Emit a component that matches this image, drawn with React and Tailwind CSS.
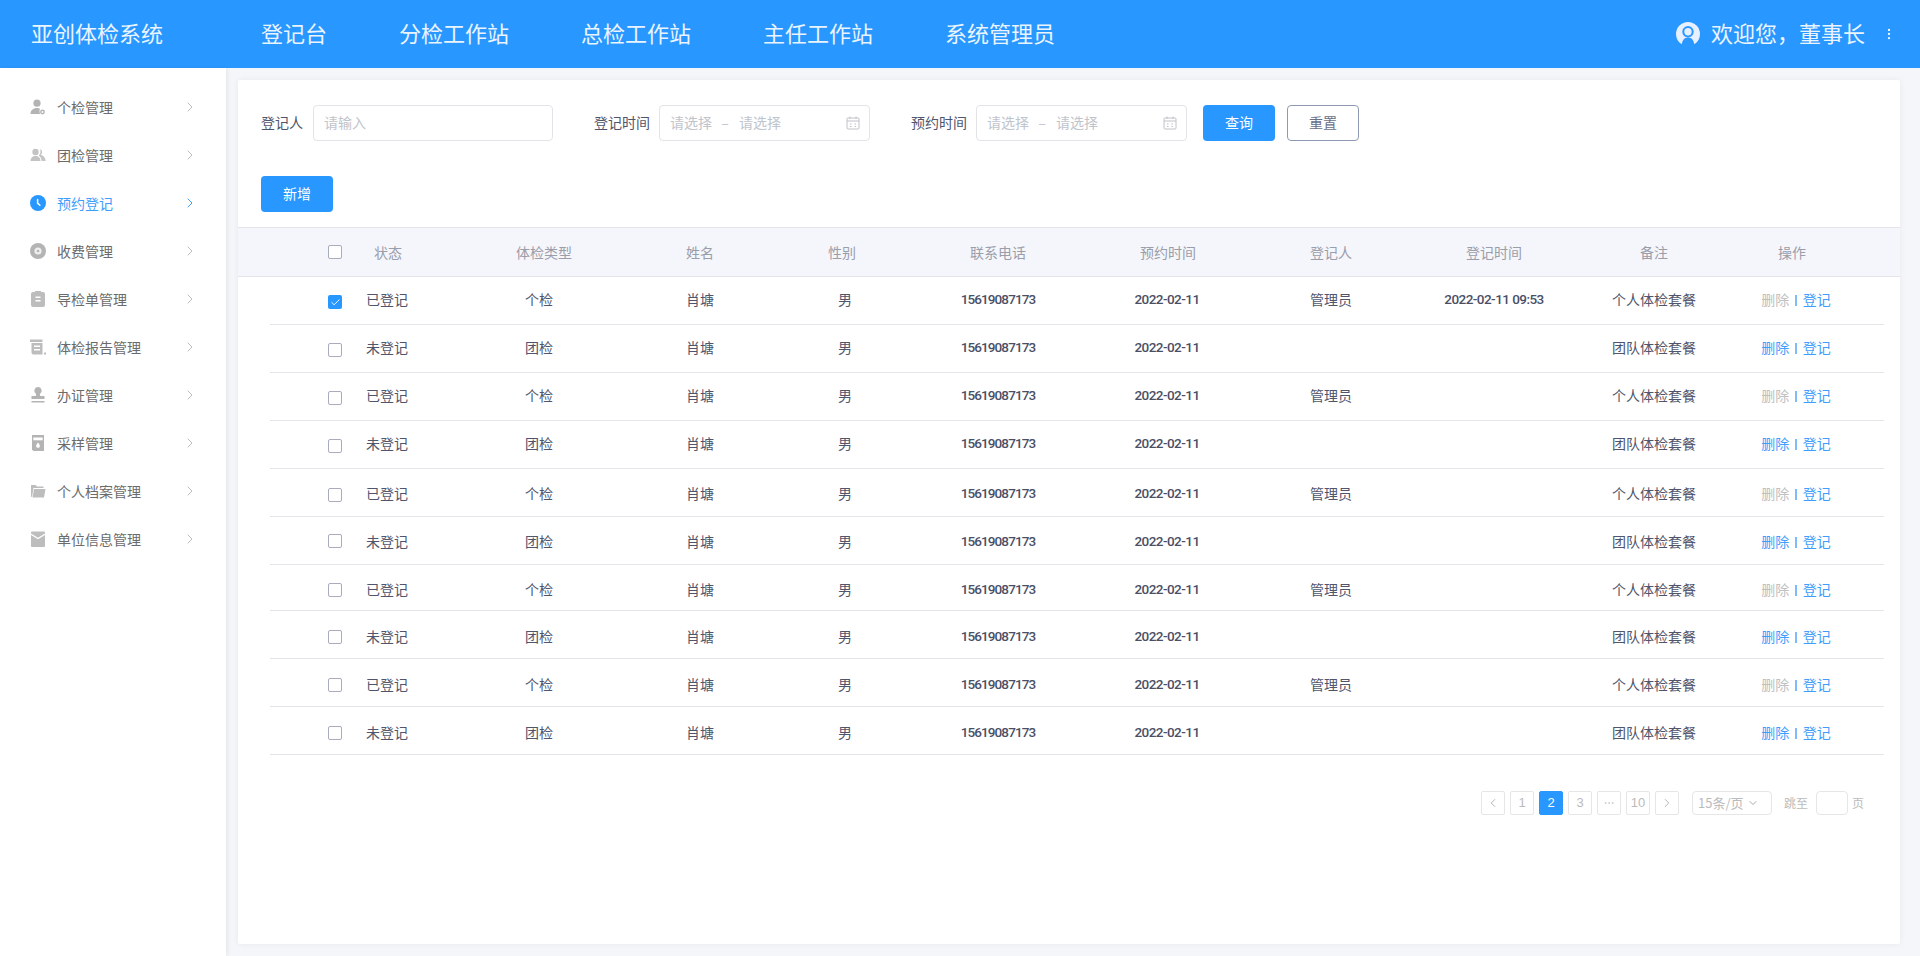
import { ChevronRight, ChevronLeft, ChevronDown, Check, MoreHorizontal } from 'lucide-react';

const navItems = ['登记台', '分检工作站', '总检工作站', '主任工作站', '系统管理员'];

const IconPerson = ({ color }) => (
  <svg width="16" height="16" viewBox="0 0 16 16" fill={color}>
    <circle cx="7" cy="4.2" r="3.6" />
    <path d="M0.5 15c0-3.6 2.6-6 6.5-6 1.2 0 2.2 0.2 3.1 0.7C9.4 10.600 9.200 12.900 10.300 15z" />
    <circle cx="12.500" cy="13" r="2.400" />
    <circle cx="12.500" cy="13" r="0.900" fill="#fff" />
  </svg>
);
const IconGroup = ({ color }) => (
  <svg width="16" height="16" viewBox="0 0 16 16" fill={color}>
    <circle cx="5.500" cy="5" r="3.200" />
    <path d="M0.500 14c0-3 2-5 5-5s5 2 5 5z" />
    <path d="M9.800 2.200a3 3 0 0 1 0.800 5.600c2.700 0.500 4.900 2.800 5 6.200h-4c0-2.400-1-4.200-2.800-5.600 1.900-1.600 2.200-4.300 1-6.200z" />
  </svg>
);
const IconClock = ({ color }) => (
  <svg width="16" height="16" viewBox="0 0 16 16">
    <circle cx="8" cy="8" r="8" fill={color} />
    <path d="M7.600 4.500v3.600l2.300 2.200" stroke="#fff" strokeWidth="1.500" fill="none" strokeLinecap="round" />
  </svg>
);
const IconDisc = ({ color }) => (
  <svg width="16" height="16" viewBox="0 0 16 16">
    <circle cx="8" cy="8" r="8" fill={color} />
    <circle cx="8" cy="8" r="3.600" fill="#eee" />
    <circle cx="8" cy="8" r="1.300" fill={color} />
  </svg>
);
const IconClipboard = ({ color }) => (
  <svg width="16" height="16" viewBox="0 0 16 16">
    <path d="M3 1h2V0h6v1h2a2 2 0 0 1 2 2v11a2 2 0 0 1-2 2H3a2 2 0 0 1-2-2V3a2 2 0 0 1 2-2z" fill={color} />
    <rect x="5.500" y="5.500" width="5" height="1.500" fill="#fff" />
    <rect x="5.500" y="9" width="5" height="1.500" fill="#fff" />
  </svg>
);
const IconReport = ({ color }) => (
  <svg width="16" height="16" viewBox="0 0 16 16" fill={color}>
    <path d="M0 0.500h12.500v2.500H0z" />
    <path d="M1.500 4h11v11.500H3.500a2 2 0 0 1-2-2zM4 6.500v1.500h6V6.500zM4 10v1.500h6V10z" fillRule="evenodd" />
    <rect x="14" y="13.500" width="2" height="2" />
  </svg>
);
const IconStamp = ({ color }) => (
  <svg width="16" height="16" viewBox="0 0 16 16" fill={color}>
    <path d="M8 0a3.600 3.600 0 0 1 2.300 6.400c-0.500 0.500-0.600 1.600 0 2.600h4.200v3H1.500V9h4.200c0.600-1 0.500-2.100 0-2.600A3.600 3.600 0 0 1 8 0z" />
    <rect x="1.500" y="14" width="13" height="1.500" />
  </svg>
);
const IconCup = ({ color }) => (
  <svg width="16" height="16" viewBox="0 0 16 16">
    <path d="M2 0h12v16H3.500L2 14.500z" fill={color} />
    <rect x="3.300" y="2.500" width="9.400" height="2.800" fill="#fff" />
    <path d="M8 7.500c1.200 1.500 1.900 2.400 1.900 3.400a1.900 1.900 0 0 1-3.800 0c0-1 0.700-1.900 1.900-3.400z" fill="#fff" />
  </svg>
);
const IconFolder = ({ color }) => (
  <svg width="16" height="16" viewBox="0 0 16 16" fill={color}>
    <path d="M1 2h4.500l1.500 1.500h6.500V5H3.500L2 14 1 13.500z" />
    <path d="M4 6h11.500L14 14.500H2.500z" />
  </svg>
);
const IconEnvelope = ({ color }) => (
  <svg width="16" height="16" viewBox="0 0 16 16" fill={color}>
    <path d="M2 0.500h12a1 1 0 0 1 1 1v1L8 6.800 1 2.500v-1a1 1 0 0 1 1-1z" />
    <path d="M1 4l7 4.300L15 4v11a1 1 0 0 1-1 1H2a1 1 0 0 1-1-1z" />
  </svg>
);

const sideItems = [
  { label: '个检管理', Icon: IconPerson },
  { label: '团检管理', Icon: IconGroup, color: '#c4c4c4' },
  { label: '预约登记', Icon: IconClock, active: true },
  { label: '收费管理', Icon: IconDisc },
  { label: '导检单管理', Icon: IconClipboard, color: '#bdbdbd' },
  { label: '体检报告管理', Icon: IconReport, color: '#bdbdbd' },
  { label: '办证管理', Icon: IconStamp },
  { label: '采样管理', Icon: IconCup },
  { label: '个人档案管理', Icon: IconFolder, color: '#bdbdbd' },
  { label: '单位信息管理', Icon: IconEnvelope, color: '#bdbdbd' },
];

// row heights and nudges read off the picture, the lines are not quite even
const rows = [
  { row: 'h-[48px] pb-[2px]', box: 'mt-[5px]', done: true, checked: true },
  { row: 'h-[48px] pb-[2px]', box: 'mt-[5px]', done: false },
  { row: 'h-[48px] pb-[2px]', box: 'mt-[5px]', done: true },
  { row: 'h-[48px] pb-[2px]', box: 'mt-[5px]', done: false },
  { row: 'h-[48px] pt-[2px]', box: 'mt-[2px]', done: true },
  { row: 'h-[48px] pt-[2px]', box: 'mb-[2px]', done: false },
  { row: 'h-[46px] pt-[4px]', box: '', done: true },
  { row: 'h-[48px] pt-[4px]', box: '', done: false },
  { row: 'h-[48px] pt-[4px]', box: '', done: true },
  { row: 'h-[48px] pt-[4px]', box: '', done: false },
];

const headCols = 'grid-cols-[80px_108px_172px_140px_144px_168px_172px_154px_172px_148px_128px]';
const bodyCols = 'grid-cols-[80px_108px_162px_160px_130px_176px_162px_166px_160px_160px_124px]';
const phoneText = "font-['Roboto'] font-medium text-[13.5px] tracking-[-0.9px] text-[#4a4f66]";
const dateText = "font-['Roboto'] font-medium text-[13.5px] tracking-[-0.55px] text-[#4a4f66]";

function Checkbox({ checked, className }) {
  if (checked) {
    return (
      <span className={`ml-[58px] flex h-[14px] w-[14px] items-center justify-center rounded-[2px] bg-[#2897ff] ${className}`}>
        <Check size={11} color="#fff" strokeWidth={2} />
      </span>
    );
  }
  return <span className={`ml-[58px] block h-[14px] w-[14px] rounded-[2px] border border-[#a9acbd] bg-white ${className}`} />;
}

function DateRange() {
  return (
    <div className="flex h-[36px] w-[211px] items-center rounded-[4px] border border-[#e2e4e8] pl-[10px] pr-[9px] text-[14px] text-[#c0c4cc]">
      <span className="pb-[2px]">请选择</span>
      <span className="ml-[8px] w-[10px] pb-[2px] text-center">–</span>
      <span className="ml-[9px] pb-[2px]">请选择</span>
      <svg className="ml-auto" width="14" height="14" viewBox="0 0 14 14" fill="none" stroke="#bfc2c9">
        <rect x="1" y="2" width="12" height="11" rx="1" />
        <path d="M4 0.500v2.500M10 0.500v2.500M1 5h12" />
        <path d="M4 8h1.500M8.500 8H10M4 10.500h1.500M8.500 10.500H10" />
      </svg>
    </div>
  );
}

function PageBox({ children, active }) {
  return (
    <span
      className={`flex h-[24px] w-[24px] items-center justify-center rounded-[2px] border font-['Liberation_Sans'] text-[13px] ${
        active ? 'border-[#2897ff] bg-[#2897ff] text-white' : 'border-[#e6e6e6] text-[#bbb]'
      }`}
    >
      {children}
    </span>
  );
}

function Row({ r }) {
  return (
    <div className={`grid ${bodyCols} items-center border-b border-[#e4e5e8] text-center text-[14px] text-[#50556b] ${r.row}`}>
      <Checkbox checked={r.checked} className={r.box} />
      <span className="pl-[16px] text-left">{r.done ? '已登记' : '未登记'}</span>
      <span>{r.done ? '个检' : '团检'}</span>
      <span>肖塘</span>
      <span>男</span>
      <span className={phoneText}>15619087173</span>
      <span className={dateText}>2022-02-11</span>
      <span>{r.done ? '管理员' : ''}</span>
      <span className={dateText}>{r.checked ? '2022-02-11 09:53' : ''}</span>
      <span>{r.done ? '个人体检套餐' : '团队体检套餐'}</span>
      <span className="flex items-center justify-center whitespace-nowrap">
        <span className={r.done ? 'text-[#c0c0c0]' : 'text-[#3f9dfb]'}>删除</span>
        <span className="mx-[6px] mt-[1px] h-[11px] w-[1.5px] bg-[#7dbbfb]" />
        <span className="text-[#3f9dfb]">登记</span>
      </span>
    </div>
  );
}

export default function App() {
  return (
    <div className="flex h-screen flex-col overflow-hidden bg-[#f5f6fa] font-['Noto_Sans_CJK_SC',sans-serif]">
      <header className="flex h-[68px] shrink-0 items-center bg-[#2897ff] pl-[31px] pr-[24px] text-[22px] text-[#eaf4ff]">
        <div className="w-[230px] whitespace-nowrap pb-[4px]">亚创体检系统</div>
        <nav className="flex gap-[72px] pb-[4px]">
          {navItems.map((x) => (
            <span key={x} className="whitespace-nowrap">{x}</span>
          ))}
        </nav>
        <div className="ml-auto flex items-center">
          <svg width="24" height="24" viewBox="0 0 24 24" className="mr-[11px]">
            <circle cx="12" cy="12" r="12" fill="#e6f0ff" />
            <path d="M5.500 24C6 18.500 8 15.500 12 15.500S18 18.500 18.500 24z" fill="#2897ff" />
            <circle cx="12" cy="9.700" r="5.700" fill="#2897ff" />
            <circle cx="12" cy="9.700" r="3.700" fill="#e6f0ff" />
          </svg>
          <span className="whitespace-nowrap pb-[4px]">欢迎您，董事长</span>
          <MoreHorizontal size={14} className="ml-[17px] rotate-90" color="#eaf4ff" />
        </div>
      </header>

      <div className="flex min-h-0 flex-1">
        <aside className="w-[226px] shrink-0 bg-white pt-[16px] shadow-[2px_0_4px_rgba(0,0,0,0.06)]">
          {sideItems.map(({ label, Icon, active, color }) => (
            <div key={label} className={`flex h-[48px] items-center pb-[2px] pl-[30px] pr-[28px] text-[14px] ${active ? 'text-[#3f9dfb]' : 'text-[#6b6b6b]'}`}>
              <Icon color={active ? '#2897ff' : color || '#b4b4b4'} />
              <span className="ml-[11px]">{label}</span>
              <ChevronRight size={16} strokeWidth={1.5} color={active ? '#3f9dfb' : '#bdbdbd'} className="ml-auto" />
            </div>
          ))}
        </aside>

        <main className="mb-[12px] ml-[12px] mr-[20px] mt-[12px] flex-1 rounded-[2px] bg-white shadow-[0_0_6px_rgba(0,0,0,0.06)]">
          <div className="mt-[25px] flex h-[36px] items-center pl-[23px] text-[14px] text-[#50556b]">
            <span className="w-[52px] pb-[2px]">登记人</span>
            <div className="flex h-[36px] w-[240px] items-center rounded-[4px] border border-[#e2e4e8] pb-[2px] pl-[10px] text-[#c0c4cc]">请输入</div>
            <span className="ml-[41px] w-[65px] pb-[2px]">登记时间</span>
            <DateRange />
            <span className="ml-[41px] w-[65px] pb-[2px]">预约时间</span>
            <DateRange />
            <button className="ml-[16px] h-[36px] w-[72px] rounded-[4px] bg-[#2897ff] pb-[2px] text-white">查询</button>
            <button className="ml-[12px] h-[36px] w-[72px] rounded-[4px] border border-[#8f99b3] pb-[2px] text-[#6b7085]">重置</button>
          </div>
          <button className="ml-[23px] mt-[35px] block h-[36px] w-[72px] rounded-[4px] bg-[#2897ff] pb-[2px] text-[14px] text-white">新增</button>

          <div className={`mt-[15px] grid h-[50px] ${headCols} items-center border-y border-[#e4e5e8] bg-[#f5f6fb] pl-[32px] text-center text-[14px] text-[#9a9daa]`}>
            <Checkbox />
            <span className="pl-[24px] text-left">状态</span>
            <span>体检类型</span>
            <span>姓名</span>
            <span>性别</span>
            <span>联系电话</span>
            <span>预约时间</span>
            <span>登记人</span>
            <span>登记时间</span>
            <span>备注</span>
            <span>操作</span>
          </div>
          <div className="ml-[32px] mr-[16px]">
            {rows.map((r, i) => (
              <Row key={i} r={r} />
            ))}
          </div>

          <div className="mt-[36px] flex items-center pl-[1243px] text-[12px] text-[#bbb]">
            <div className="flex gap-[5px]">
              <PageBox><ChevronLeft size={14} strokeWidth={1.5} color="#aaa" /></PageBox>
              <PageBox>1</PageBox>
              <PageBox active>2</PageBox>
              <PageBox>3</PageBox>
              <PageBox><MoreHorizontal size={12} strokeWidth={1.2} color="#bbb" /></PageBox>
              <PageBox>10</PageBox>
              <PageBox><ChevronRight size={14} strokeWidth={1.5} color="#aaa" /></PageBox>
            </div>
            <div className="ml-[13px] flex h-[24px] w-[80px] items-center rounded-[4px] border border-[#e6e6e6] pl-[5px] text-[13px]">
              15条/页<ChevronDown size={12} className="ml-[3px]" color="#aaa" />
            </div>
            <span className="ml-[12px]">跳至</span>
            <span className="ml-[8px] h-[24px] w-[32px] rounded-[4px] border border-[#e6e6e6]" />
            <span className="ml-[4px]">页</span>
          </div>
        </main>
      </div>
    </div>
  );
}
